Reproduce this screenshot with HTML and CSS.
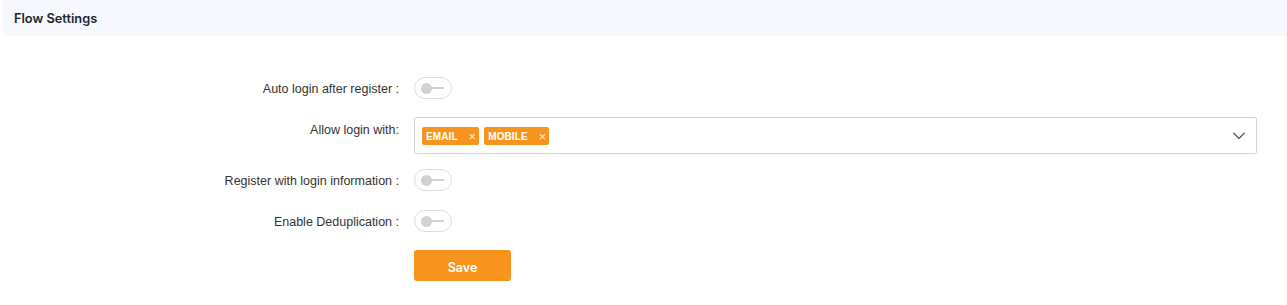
FILE: index.html
```html
<!DOCTYPE html>
<html>
<head>
<meta charset="utf-8">
<link rel="stylesheet" href="styles.css">
</head>
<body>
<div class="page">
  <div class="header">Flow Settings</div>
  <div class="form">
    <div class="row r1">
      <div class="label">Auto login after register :</div>
      <div class="field"><span class="toggle"><span class="knob"></span><span class="bar"></span></span></div>
    </div>
    <div class="row r2">
      <div class="label">Allow login with:</div>
      <div class="field">
        <div class="select">
          <div class="tags">
            <span class="tag"><span class="tag-text">EMAIL</span><span class="tag-x">×</span></span>
            <span class="tag"><span class="tag-text">MOBILE</span><span class="tag-x">×</span></span>
          </div>
          <svg class="chev" width="12" height="8" viewBox="0 0 12 8"><path d="M0.5 0.8 L6 6.5 L11.5 0.8" fill="none" stroke="#444" stroke-width="1.2"/></svg>
        </div>
      </div>
    </div>
    <div class="row r3">
      <div class="label">Register with login information :</div>
      <div class="field"><span class="toggle"><span class="knob"></span><span class="bar"></span></span></div>
    </div>
    <div class="row r4">
      <div class="label">Enable Deduplication :</div>
      <div class="field"><span class="toggle"><span class="knob"></span><span class="bar"></span></span></div>
    </div>
    <div class="row r5">
      <div class="label"></div>
      <div class="field"><button class="save">Save</button></div>
    </div>
  </div>
</div>
</body>
</html>
```
FILE: styles.css
```css
html, body { margin: 0; padding: 0; background: #fff; }
.page { margin-left: 3px; font-family: "Liberation Sans", Arial, sans-serif; }
.header {
  height: 36px;
  background: #f6f8fd;
  display: flex;
  align-items: center;
  padding-left: 11px;
  font-family: Inter, "Open Sans", sans-serif;
  font-weight: 600;
  font-size: 12.8px;
  color: #22252b;
}
.form { padding-top: 41px; padding-right: 30px; }
.row { display: flex; align-items: center; }
.r1 { height: 22px; margin-bottom: 18px; }
.r2 { height: 37px; margin-bottom: 15px; }
.r3 { height: 22px; margin-bottom: 19px; }
.r4 { height: 22px; margin-bottom: 18px; }
.r5 { height: 31px; }
.label {
  width: 396px;
  flex: none;
  text-align: right;
  font-size: 12.5px;
  color: #333;
  padding-right: 15px;
  box-sizing: content-box;
  padding-top: 1px;
}
.r2 .label { align-self: flex-start; padding-top: 6px; }
.field { flex: 1; display: flex; align-items: center; height: 100%; }
.toggle {
  height: 20px;
  border: 1px solid #dedede;
  border-radius: 11px;
  display: flex; align-items: center;
  padding-left: 6px;
  box-sizing: content-box;
  width: 30px;
}
.knob { width: 11px; height: 11px; border-radius: 50%; background: #d2d2d2; flex: none; }
.bar { width: 13px; height: 2px; background: #d2d2d2; margin-left: -1px; }
.select {
  flex: 1;
  height: 37px;
  box-sizing: border-box;
  border: 1px solid #d4d4d4;
  border-radius: 2px;
  display: flex;
  align-items: center;
  padding-left: 7px;
  padding-right: 11px;
}
.tags { flex: 1; display: flex; gap: 5px; }
.tag {
  height: 18px;
  background: #f7941d;
  border-radius: 2px;
  display: flex;
  align-items: center;
  padding: 1px 3px 0 4px;
  box-sizing: border-box;
  color: #fff;
}
.tag-text { font-weight: bold; font-size: 10px; letter-spacing: 0.1px; }
.tag-x { font-size: 13px; margin-left: 11px; color: rgba(255,255,255,0.85); line-height: 1; }
.chev { flex: none; }
.save {
  width: 97px; height: 31px;
  background: #f7941d;
  border: none;
  border-radius: 3px;
  color: #fff;
  font-family: Inter, "Open Sans", sans-serif;
  font-weight: 600;
  font-size: 12.5px;
  padding: 3px 0 0 0;
}
```
